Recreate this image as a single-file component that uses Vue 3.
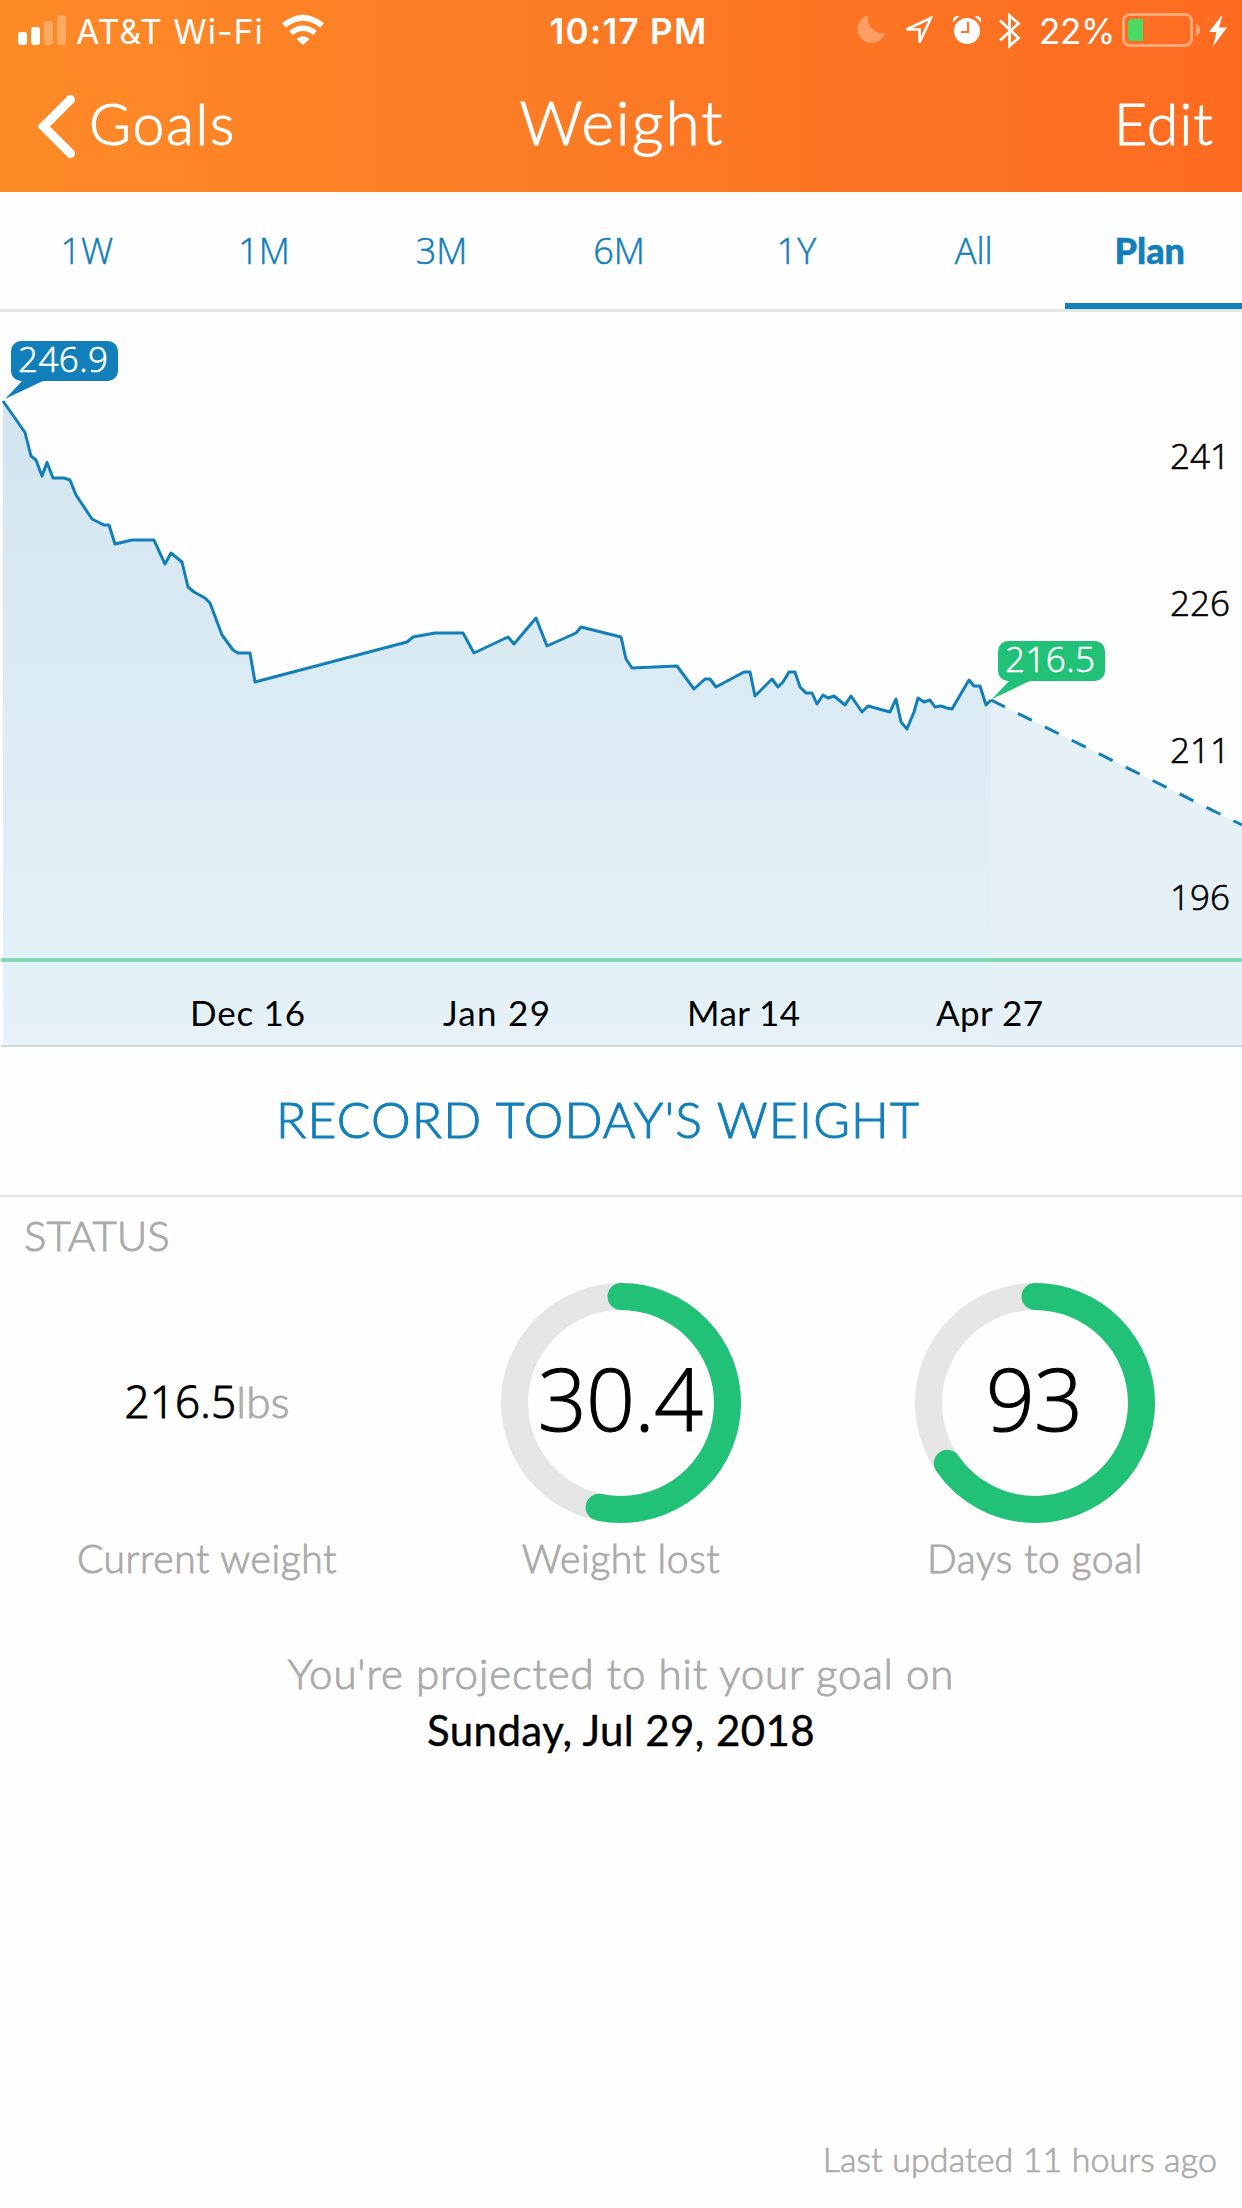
<template>
  <div class="page">
    <header class="header">
      <div class="status-bar">
        <div class="status-left">
          <svg class="signal" width="48" height="60" viewBox="18 0 48 60" fill="#fff">
            <rect x="18" y="32" width="9" height="13" rx="3" />
            <rect x="31" y="27" width="9" height="18" rx="3" />
            <rect x="44" y="21" width="9" height="24" rx="3" opacity="0.28" />
            <rect x="57" y="15" width="9" height="30" rx="3" opacity="0.28" />
          </svg>
          <span class="carrier">AT&amp;T Wi-Fi</span>
          <svg class="wifi" width="42" height="60" viewBox="282 0 42 60">
            <g fill="none" stroke="#fff">
              <path d="M284 25.500Q303 10 322 25.500" stroke-width="6" />
              <path d="M291 33Q303 23.500 315 33" stroke-width="5.500" />
            </g>
            <path d="M296.500 39Q303 33.500 309.500 39L303 45Z" fill="#fff" />
          </svg>
        </div>
        <div class="time">10:17 PM</div>
        <div class="status-right">
          <svg width="28" height="60" viewBox="857 0 28 60">
            <path d="M868 15.500A14 14 0 1 0 885 33A15 15 0 0 1 868 15.500Z" fill="#fff" opacity="0.3" />
          </svg>
          <svg class="location" width="31" height="60" viewBox="903 0 31 60">
            <path d="M931 17.800L906.500 29.500H919.500V42.500Z" fill="none" stroke="#fff" stroke-width="2.600" />
          </svg>
          <svg class="alarm" width="28" height="60" viewBox="953 0 28 60">
            <circle cx="967" cy="31" r="13" fill="#fff" />
            <path d="M953 22.500V19Q953 16 959.500 16ZM981 22.500V19Q981 16 974.500 16Z" fill="#fff" />
            <path d="M968 22V32H961" fill="none" stroke="#fc7424" stroke-width="2.200" />
          </svg>
          <svg class="bluetooth" width="22" height="60" viewBox="999 0 22 60">
            <path d="M1000 20.500L1018.500 38L1009.500 46V15.500L1018.500 23.500L1000 40.500" fill="none" stroke="#fff" stroke-width="2.800" />
          </svg>
          <span class="percent">22%</span>
          <svg class="battery" width="79" height="60" viewBox="1122 0 79 60">
            <rect x="1123.500" y="14.500" width="68" height="31" rx="6.500" fill="none" stroke="#fff" stroke-width="3" opacity="0.4" />
            <path d="M1196 24Q1200 25.500 1200 30T1196 36Z" fill="#fff" opacity="0.4" />
            <path d="M1143 19H1132Q1128 19 1128 23V37Q1128 41 1132 41H1143Z" fill="#4cd964" />
          </svg>
          <svg class="bolt" width="18" height="60" viewBox="1209 0 18 60">
            <path d="M1222.500 14.500L1209 32H1216.500L1213 46.500L1227 27.500H1219Z" fill="#fff" />
          </svg>
        </div>
      </div>
      <nav class="nav">
        <a class="back">
          <svg width="38" height="66" viewBox="38 94 38 66">
            <path d="M70.500 99.500L43.500 126.500L70.500 153.500" fill="none" stroke="#fff" stroke-width="9" stroke-linecap="round" />
          </svg>
          <span>Goals</span>
        </a>
        <h1 class="title">Weight</h1>
        <a class="edit">Edit</a>
      </nav>
    </header>

    <div class="tabs">
      <div v-for="tab in tabs" :key="tab" :class="['tab',{active:tab===current}]" @click="current=tab">
        {{ tab }}
      </div>
    </div>

    <svg class="chart" width="1242" height="735" viewBox="0 312 1242 735">
      <defs>
        <linearGradient id="area" x1="0" y1="401" x2="0" y2="1045" gradientUnits="userSpaceOnUse">
          <stop offset="0" stop-color="#d2e5f0" />
          <stop offset="1" stop-color="#e6f2f8" />
        </linearGradient>
      </defs>
      <polygon :points="areaPoints" fill="url(#area)" />
      <polygon points="991,700 1242,825 1242,1045 991,1045" fill="#e6f1f7" />
      <rect x="1" y="958" width="1241" height="4" fill="#82dab5" />
      <rect x="1" y="1045" width="1241" height="2" fill="#cdd9df" />
      <polyline :points="linePoints" class="line" />
      <path d="M991 700L1242 825" class="line projected" />

      <g v-for="c in callouts" :key="c.value" :fill="c.color">
        <rect :x="c.x" :y="c.y" width="107" height="40" rx="10" />
        <path :d="`M${c.x+12} ${c.y+39}L${c.x-6} ${c.y+58}L${c.x+34} ${c.y+39}Z`" />
        <text :x="c.x+7" :y="c.y+31" textLength="90" class="chart-text callout-text">{{ c.value }}</text>
      </g>

      <text v-for="l in yLabels" :key="l.text" x="1170" :y="l.y" textLength="60" class="chart-text">{{ l.text }}</text>
      <text v-for="l in xLabels" :key="l.text" :x="l.x" y="1026" :textLength="l.width" class="chart-text date">{{ l.text }}</text>
    </svg>

    <button class="record">RECORD TODAY'S WEIGHT</button>

    <section class="status">
      <h2 class="status-title">STATUS</h2>
      <div class="metrics">
        <div class="metric">
          <div class="metric-value current">216.5<span class="unit">lbs</span></div>
          <div class="metric-label">Current weight</div>
        </div>
        <div v-for="r in rings" :key="r.label" class="metric">
          <div class="metric-value">
            <svg class="ring" width="240" height="240" viewBox="0 0 240 240">
              <circle cx="120" cy="120" r="106.500" class="track" />
              <circle cx="120" cy="120" r="106.500" class="progress" pathLength="1000" :stroke-dasharray="`${r.progress*1000} 1000`" transform="rotate(-90 120 120)" />
            </svg>
            <span class="ring-value">{{ r.value }}</span>
          </div>
          <div class="metric-label">{{ r.label }}</div>
        </div>
      </div>
      <p class="projection">You're projected to hit your goal on</p>
      <p class="goal-date">Sunday, Jul 29, 2018</p>
    </section>

    <footer class="updated">Last updated 11 hours ago</footer>
  </div>
</template>
<script setup>
  import {ref,computed} from 'vue';
  const tabs=['1W','1M','3M','6M','1Y','All','Plan'];
  const current=ref('Plan');

  // weigh-ins as x,y on the chart
  const points=[
    [3,401],[25,432.5],[31,456],[36,460],[42,476],[47,462.5],[53,478],[64,478],[70,480],[76,495],
    [92,519],[104,525],[109,525],[115,544],[132,540],[154,540],[165,564],[171,553],[182,562],[188,587],
    [194,592],[205,598],[210,603],[222,635],[233,650],[238,653],[250,653],[255,682],[407,642],[413,637],
    [435,633],[463,633],[474,653],[508,637],[514,644],[536,618],[547,646],[576,633],[581,627],[621,637],
    [626,659],[632,668],[677,666],[694,689],[705,679],[710,679],[716,687],[744,672],[750,672],[755,696],
    [772,679],[778,687],[783,682],[789,672],[795,672],[800,687],[806,693],[812,693],[817,704],[823,695],
    [828,698],[834,696],[845,705],[851,696],[862,712],[868,706],[890,712],[896,699],[901,722],[907,729],
    [914,712],[918,698],[924,702],[930,700],[935,707],[941,706],[947,708],[952,709],[969,680],[974,686],
    [980,686],[986,705],[991,700]
  ];
  const linePoints=computed(()=>points.map(p=>p.join(',')).join(' '));
  const areaPoints=computed(()=>`3,1045 ${linePoints.value} 991,1045`);

  const callouts=[
    {value:'246.9',x:11,y:341,color:'#127fba'},
    {value:'216.5',x:998,y:641,color:'#21c277'}
  ];
  const yLabels=[
    {text:'241',y:469},
    {text:'226',y:616},
    {text:'211',y:763},
    {text:'196',y:910}
  ];
  const xLabels=[
    {text:'Dec 16',x:190,width:115},
    {text:'Jan 29',x:443,width:107},
    {text:'Mar 14',x:687,width:113},
    {text:'Apr 27',x:936,width:107}
  ];
  const rings=[
    {label:'Weight lost',value:'30.4',progress:0.533},
    {label:'Days to goal',value:'93',progress:0.654}
  ];
</script>
<style>
body {
  margin: 0;
  background: #fff;
}
</style>
<style scoped>
.page {
  display: flex;
  flex-direction: column;
  width: 1242px;
  height: 2208px;
  overflow: hidden;
  background: #fefefe;
  font-family: Lato, "Open Sans", sans-serif;
  font-weight: 300;
  color: #000;
}
.header {
  height: 192px;
  color: #fff;
  background: linear-gradient(90deg, #fe8a27 0%, #fc7a25 50%, #fd6b21 100%);
}
.status-bar {
  display: grid;
  grid-template-columns: 1fr auto 1fr;
  height: 60px;
  padding: 0 15px 0 18px;
  font: 400 34px/63px Inter, sans-serif;
}
.status-left, .status-right {
  display: flex;
}
.status-right {
  justify-content: flex-end;
}
.carrier {
  width: 186px;
  margin: 0 20px 0 10px;
  letter-spacing: 0.9px;
  white-space: nowrap;
}
.time {
  padding-left: 12px;
  font-size: 35px;
  font-weight: 600;
  letter-spacing: 1.3px;
}
.location {
  margin-left: 18px;
}
.alarm {
  margin-left: 19px;
}
.bluetooth {
  margin-left: 18px;
}
.percent {
  width: 75px;
  margin: 0 8px 0 18px;
  font-size: 35px;
  letter-spacing: -0.4px;
  white-space: nowrap;
}
.bolt {
  margin-left: 8px;
}
.nav {
  display: grid;
  grid-template-columns: 1fr auto 1fr;
  padding: 0 28px;
  font-size: 57px;
  line-height: 126px;
  -webkit-text-stroke: 1.1px #fff;
}
.back {
  display: flex;
  margin-left: 10px;
  letter-spacing: 1.9px;
}
.back svg {
  margin: 34px 13px 0 0;
}
.title {
  margin: 0;
  padding-left: 2px;
  font-size: 62px;
  line-height: 122px;
  font-weight: 300;
  letter-spacing: 2.1px;
}
.edit {
  letter-spacing: 1.2px;
  text-align: right;
}
.tabs {
  display: flex;
  height: 117px;
  border-bottom: 3px solid #e5e5e5;
}
.tab {
  flex: none;
  box-sizing: border-box;
  width: calc(100% / 7);
  padding-right: 4px;
  font: 300 36px/117px "Open Sans", sans-serif;
  text-align: center;
  color: #127fba;
  -webkit-text-stroke: 0.5px #127fba;
}
.tab.active {
  height: 117px;
  padding-right: 7px;
  border-bottom: 6px solid #127fba;
  font-family: Lato, sans-serif;
  font-weight: 900;
  line-height: 116px;
}
.chart {
  display: block;
  flex: none;
}
.line {
  fill: none;
  stroke: #127fba;
  stroke-width: 3;
  stroke-linejoin: round;
}
.projected {
  stroke-dasharray: 15.5 14.6;
}
.chart-text {
  font: 300 35px "Open Sans", sans-serif;
  fill: #000;
  stroke: #000;
  stroke-width: 0.6px;
}
.date {
  font-family: Lato, sans-serif;
  font-weight: 400;
  stroke: none;
}
.callout-text {
  fill: #fff;
  stroke: #fff;
}
.record {
  height: 148px;
  padding: 0 46px 3px 0;
  border: 0;
  background: none;
  font: 300 50px/145px Lato, sans-serif;
  letter-spacing: 1.15px;
  color: #127fba;
  -webkit-text-stroke: 1px #127fba;
}
.status {
  border-top: 2px solid #e3e3e3;
}
.status-title {
  margin: 0 0 9px 24px;
  font-size: 42px;
  line-height: 77px;
  font-weight: 300;
  color: #aaa;
  -webkit-text-stroke: 0.9px #aaa;
}
.metrics {
  display: grid;
  grid-template-columns: repeat(3, 1fr);
}
.metric {
  text-align: center;
}
.metric-value {
  display: grid;
  place-items: center;
  height: 240px;
}
.metric-value > * {
  grid-area: 1 / 1;
}
.metric-value.current {
  display: block;
  font: 300 44px/236px "Open Sans", sans-serif;
  letter-spacing: 0.2px;
  -webkit-text-stroke: 1px #000;
}
.unit {
  font-family: Lato, sans-serif;
  font-weight: 300;
  color: #aaa;
  -webkit-text-stroke: 0.9px #aaa;
}
.ring circle {
  fill: none;
  stroke-width: 27;
}
.ring .track {
  stroke: #e5e5e5;
}
.ring .progress {
  stroke: #21c277;
  stroke-linecap: round;
}
.ring-value {
  padding: 0 2px 10px 0;
  font: 300 86px/228px "Open Sans", sans-serif;
  letter-spacing: -0.8px;
  -webkit-text-stroke: 1px #000;
}
.metric-label {
  font-size: 39px;
  line-height: 70px;
  letter-spacing: 0.6px;
  color: #aaa;
  -webkit-text-stroke: 0.9px #aaa;
}
.projection, .goal-date {
  margin: 0;
  font-size: 42px;
  line-height: 57px;
  text-align: center;
}
.projection {
  margin-top: 52px;
  letter-spacing: 0.87px;
  color: #aaa;
  -webkit-text-stroke: 0.9px #aaa;
}
.goal-date {
  font-weight: 400;
  letter-spacing: 0.4px;
  -webkit-text-stroke: 0.4px #000;
}
.updated {
  margin-top: auto;
  padding: 0 25px 29px 0;
  font-size: 34px;
  line-height: 40px;
  letter-spacing: 0.1px;
  text-align: right;
  color: #aaa;
  -webkit-text-stroke: 0.7px #aaa;
}
</style>
